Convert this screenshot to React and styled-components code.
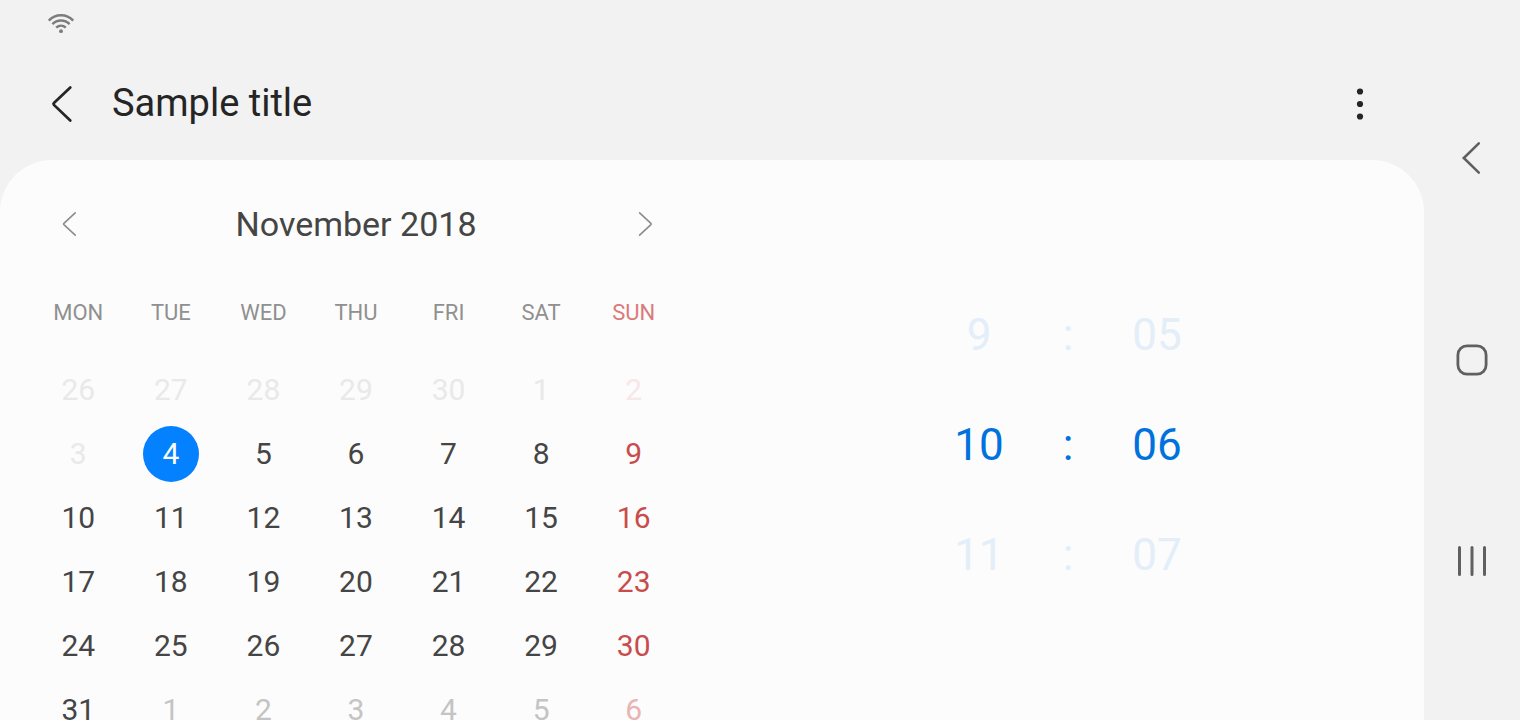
import React from "react";
import styled, { createGlobalStyle } from "styled-components";

const GlobalStyle = createGlobalStyle`
  *, *::before, *::after { box-sizing: border-box; }
  body {
    margin: 0;
    background: #f2f2f2;
    color: #252525;
    font-family: Roboto, "Liberation Sans", sans-serif;
  }
  button {
    margin: 0;
    padding: 0;
    border: 0;
    background: none;
    color: inherit;
    font: inherit;
    cursor: pointer;
  }
  svg { display: block; }
`;

const Screen = styled.div`
  display: flex;
  height: 100vh;
  overflow: hidden;
`;

const AppArea = styled.div`
  flex: 1;
  min-width: 0;
  display: flex;
  flex-direction: column;
`;

const StatusBar = styled.div`
  flex: none;
  display: flex;
  align-items: center;
  height: 48px;
  padding: 0 46px;
`;

const AppBar = styled.header`
  flex: none;
  display: flex;
  align-items: center;
  height: 112px;
  padding: 0 32px;
`;

const IconButton = styled.button`
  display: flex;
  align-items: center;
  justify-content: center;
  width: ${(p) => p.$size}px;
  height: ${(p) => p.$size}px;
`;

const Title = styled.h1`
  flex: 1;
  margin: 0 0 2px 20px;
  font-size: 38px;
  line-height: 48px;
  font-weight: 400;
`;

const Panel = styled.main`
  flex: 1;
  min-height: 0;
  display: grid;
  grid-template-columns: 1fr 1fr;
  background: #fcfcfc;
  border-radius: 52px 52px 0 0;
  overflow: hidden;
`;

const Calendar = styled.section`
  padding: 20px 32px 0;
`;

const MonthRow = styled.div`
  display: flex;
  align-items: center;
  justify-content: space-between;
  height: 88px;
  padding: 0 8px;
`;

const Month = styled.h2`
  margin: 0;
  color: #454545;
  font-size: 34px;
  line-height: 40px;
  font-weight: 400;
`;

const MonthTable = styled.table`
  width: 100%;
  table-layout: fixed;
  border-collapse: collapse;
  text-align: center;
`;

const Weekday = styled.th`
  height: 90px;
  padding: 0;
  color: ${(p) => (p.$sunday ? "#d97b7b" : "#909090")};
  font-size: 22px;
  line-height: 28px;
  font-weight: 400;
`;

const DayCell = styled.td`
  height: 64px;
  padding: 0;
`;

const dayColors = {
  past: ["#e9e9e9", "#f7e8e8"],
  current: ["#454545", "#c94c4c"],
  next: ["#c4c4c4", "#e9b4b4"],
};

const Day = styled.button`
  display: block;
  width: 56px;
  height: 56px;
  margin: 0 auto;
  border-radius: 50%;
  background: ${(p) => (p.$selected ? "#0381fe" : "none")};
  color: ${(p) => (p.$selected ? "#fcfcfc" : dayColors[p.$tone][p.$sunday ? 1 : 0])};
  font-size: 30px;
  line-height: 56px;
`;

const TimePicker = styled.section`
  display: grid;
  grid-template-columns: repeat(3, 89px);
  grid-auto-rows: 110px;
  align-content: start;
  justify-content: center;
  padding-top: 120px;
`;

const TimeValue = styled.button`
  color: ${(p) => (p.$active ? "#0072de" : "#e3eef9")};
  font-size: 44px;
  line-height: 52px;
`;

const TimeColon = styled.span`
  align-self: center;
  text-align: center;
  color: ${(p) => (p.$active ? "#0072de" : "#e3eef9")};
  font-size: 44px;
  line-height: 52px;
`;

const NavBar = styled.nav`
  flex: none;
  display: grid;
  grid-template-rows: repeat(3, 1fr);
  place-items: center;
  width: 96px;
  padding: 57px 0;
`;

const weekdays = ["MON", "TUE", "WED", "THU", "FRI", "SAT", "SUN"];

const weeks = [
  [26, 27, 28, 29, 30, 1, 2],
  [3, 4, 5, 6, 7, 8, 9],
  [10, 11, 12, 13, 14, 15, 16],
  [17, 18, 19, 20, 21, 22, 23],
  [24, 25, 26, 27, 28, 29, 30],
  [31, 1, 2, 3, 4, 5, 6],
];

const times = [
  ["9", "05"],
  ["10", "06"],
  ["11", "07"],
];

function dayTone(week, column) {
  if (week === 0 || (week === 1 && column === 0)) return "past";
  if (week === 5 && column > 0) return "next";
  return "current";
}

function WifiIcon() {
  return (
    <svg width="30" height="24" viewBox="0 0 30 24" fill="none" stroke="#7c7c7c" strokeWidth="2.5" role="img" aria-label="Wi-Fi">
      <path d="M2.8 8.6C9.4 1.6 20.6 1.6 27.2 8.6" />
      <path d="M6.4 12.1C11.3 7.2 18.7 7.2 23.6 12.1" />
      <path d="M10.2 15.6C13 13 17 13 19.8 15.6" />
      <circle cx="15" cy="19.2" r="1.9" fill="#7c7c7c" stroke="none" />
    </svg>
  );
}

function BackIcon() {
  return (
    <svg width="40" height="40" viewBox="0 0 40 40" fill="none" stroke="#252525" strokeWidth="2.7" strokeLinecap="round">
      <path d="M28.3 3.4L11.9 19.1Q11 20 11.9 20.9L28.3 36.6" />
    </svg>
  );
}

function MoreIcon() {
  return (
    <svg width="40" height="40" viewBox="0 0 40 40" fill="#252525">
      <circle cx="20" cy="7.5" r="3.1" />
      <circle cx="20" cy="20" r="3.1" />
      <circle cx="20" cy="32.5" r="3.1" />
    </svg>
  );
}

function MonthArrow({ next }) {
  return (
    <svg width="24" height="28" viewBox="0 0 24 28" fill="none" stroke="#8c8c8c" strokeWidth="1.6" strokeLinecap="round">
      <path d={next ? "M9.6 2.8L20.9 13.4Q21.5 14 20.9 14.6L9.6 25.2" : "M17.2 2.8L5.9 13.4Q5.3 14 5.9 14.6L17.2 25.2"} />
    </svg>
  );
}

function NavBackIcon() {
  return (
    <svg width="36" height="36" viewBox="0 0 36 36" fill="none" stroke="#606060" strokeWidth="2.6" strokeLinecap="round">
      <path d="M24.8 3.4L9.8 18L24.8 32.6" />
    </svg>
  );
}

function NavHomeIcon() {
  return (
    <svg width="36" height="36" viewBox="0 0 36 36" fill="none" stroke="#606060" strokeWidth="2.8">
      <rect x="3.9" y="3.9" width="28.2" height="28.2" rx="9" />
    </svg>
  );
}

function NavRecentsIcon() {
  return (
    <svg width="36" height="36" viewBox="0 0 36 36" fill="none" stroke="#606060" strokeWidth="3" strokeLinecap="round">
      <path d="M5.5 3.5V30.5M18 3.5V30.5M30.5 3.5V30.5" />
    </svg>
  );
}

export default function App() {
  return (
    <>
      <GlobalStyle />
      <Screen>
        <AppArea>
          <StatusBar>
            <WifiIcon />
          </StatusBar>
          <AppBar>
            <IconButton $size={60} aria-label="Navigate up"><BackIcon /></IconButton>
            <Title>Sample title</Title>
            <IconButton $size={64} aria-label="More options"><MoreIcon /></IconButton>
          </AppBar>
          <Panel>
            <Calendar>
              <MonthRow>
                <IconButton $size={60} aria-label="Previous month"><MonthArrow /></IconButton>
                <Month>November 2018</Month>
                <IconButton $size={60} aria-label="Next month"><MonthArrow next /></IconButton>
              </MonthRow>
              <MonthTable>
                <thead>
                  <tr>
                    {weekdays.map((name, column) => (
                      <Weekday key={name} scope="col" $sunday={column === 6}>{name}</Weekday>
                    ))}
                  </tr>
                </thead>
                <tbody>
                  {weeks.map((days, week) => (
                    <tr key={week}>
                      {days.map((day, column) => (
                        <DayCell key={column}>
                          <Day
                            $tone={dayTone(week, column)}
                            $sunday={column === 6}
                            $selected={week === 1 && column === 1}
                          >
                            {day}
                          </Day>
                        </DayCell>
                      ))}
                    </tr>
                  ))}
                </tbody>
              </MonthTable>
            </Calendar>
            <TimePicker aria-label="Time">
              {times.map(([hour, minute], row) => (
                <React.Fragment key={hour}>
                  <TimeValue $active={row === 1}>{hour}</TimeValue>
                  <TimeColon $active={row === 1}>:</TimeColon>
                  <TimeValue $active={row === 1}>{minute}</TimeValue>
                </React.Fragment>
              ))}
            </TimePicker>
          </Panel>
        </AppArea>
        <NavBar aria-label="System navigation">
          <IconButton $size={64} aria-label="Back"><NavBackIcon /></IconButton>
          <IconButton $size={64} aria-label="Home"><NavHomeIcon /></IconButton>
          <IconButton $size={64} aria-label="Recent apps"><NavRecentsIcon /></IconButton>
        </NavBar>
      </Screen>
    </>
  );
}
